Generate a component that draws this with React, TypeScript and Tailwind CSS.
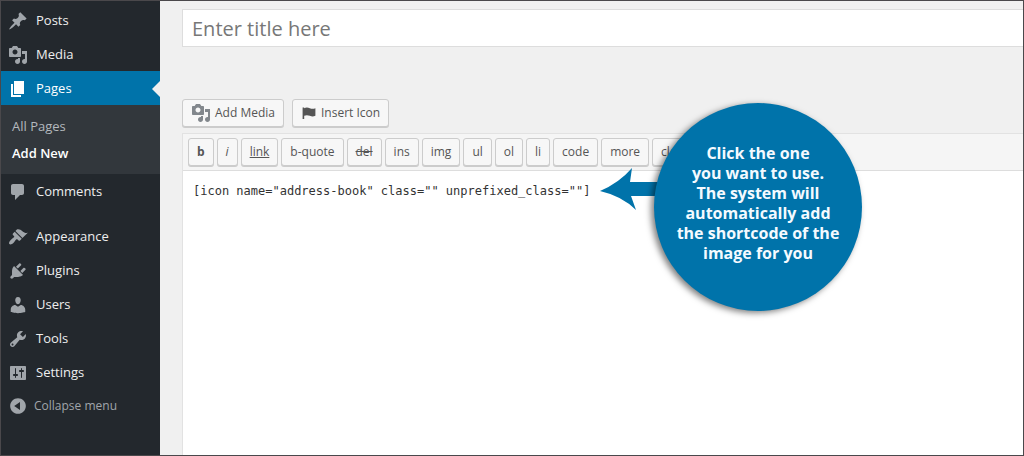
import clsx from "clsx";
import { useState } from "react";

const icons = {
  post: "M10.44 3.02l1.82-1.82 6.36 6.35-1.83 1.82c-1.05-.68-2.48-.57-3.41.36l-.75.75c-.92.93-1.04 2.35-.35 3.41l-1.83 1.82-2.41-2.41-2.8 2.79c-.42.42-3.38 2.71-3.8 2.29s1.86-3.39 2.28-3.81l2.79-2.79L4.1 9.36l1.83-1.82c1.05.69 2.48.57 3.4-.36l.75-.75c.93-.92 1.05-2.35.36-3.41z",
  media:
    "M13 11V4c0-.55-.45-1-1-1h-1.67L9 1H5L3.67 3H2c-.55 0-1 .45-1 1v7c0 .55.45 1 1 1h10c.55 0 1-.45 1-1zM7 4.5c1.38 0 2.5 1.12 2.5 2.5S8.38 9.5 7 9.5 4.5 8.38 4.5 7 5.62 4.5 7 4.5zM14 6h5v10.5c0 1.38-1.12 2.5-2.5 2.5S14 17.88 14 16.5s1.12-2.5 2.5-2.5c.17 0 .34.02.5.05V9h-3V6zm-4 8.05V13h2v3.5c0 1.38-1.12 2.5-2.5 2.5S7 17.88 7 16.5 8.12 14 9.5 14c.17 0 .34.02.5.05z",
  page: "M6 15V2h10v13H6zm-1 1h8v2H3V5h2v11z",
  comments: "M5 2h9c1.1 0 2 .9 2 2v7c0 1.1-.9 2-2 2h-2l-5 5v-5H5c-1.1 0-2-.9-2-2V4c0-1.1.9-2 2-2z",
  appearance:
    "M14.48 11.06L7.41 3.99l1.5-1.5c.5-.56 2.3-.47 3.51.32 1.21.8 1.43 1.28 2.91 2.1 1.18.64 2.45 1.26 4.45.85zm-.71.71L6.7 4.7 4.93 6.47c-.39.39-.39 1.02 0 1.41l1.06 1.06c.39.39.39 1.03 0 1.42-.6.6-1.43 1.11-2.21 1.69-.35.26-.7.53-1.01.84C1.43 14.23.4 16.08 1.4 17.07c.99 1 2.84-.03 4.18-1.36.31-.31.58-.66.85-1.02.57-.78 1.08-1.61 1.69-2.21.39-.39 1.02-.39 1.41 0l1.06 1.06c.39.39 1.02.39 1.41 0z",
  plugins:
    "M13.11 4.36L9.87 7.6 8 5.73l3.24-3.24c.35-.34 1.05-.2 1.56.32.52.51.66 1.21.31 1.55zm-8 1.77l.91-1.12 9.01 9.01-1.19.84c-.71.71-2.63 1.16-3.82 1.16H6.14L4.9 17.26c-.59.59-1.54.59-2.12 0-.59-.58-.59-1.53 0-2.12l1.24-1.24v-3.88c0-1.13.4-3.19 1.09-3.89zm7.26 3.97l3.24-3.24c.34-.35 1.04-.21 1.55.31.52.51.66 1.21.31 1.55l-3.24 3.25z",
  users:
    "M10 9.25c-2.27 0-2.73-3.44-2.73-3.44C7 4.02 7.82 2 9.97 2c2.16 0 2.98 2.02 2.71 3.81 0 0-.41 3.44-2.68 3.44zm0 2.57L12.72 10c2.39 0 4.52 2.33 4.52 4.53v2.49s-3.65 1.13-7.24 1.13c-3.65 0-7.24-1.13-7.24-1.13v-2.49c0-2.25 1.94-4.48 4.47-4.48z",
  tools:
    "M16.68 9.77c-1.34 1.34-3.3 1.67-4.95.99l-5.41 6.52c-.99.99-2.59.99-3.58 0s-.99-2.59 0-3.57l6.52-5.42c-.68-1.65-.35-3.61.99-4.95 1.28-1.28 3.12-1.62 4.72-1.06l-2.89 2.89 2.82 2.82 2.86-2.87c.53 1.58.18 3.39-1.08 4.65zM3.81 16.21c.4.39 1.04.39 1.43 0 .4-.4.4-1.04 0-1.43-.39-.4-1.03-.4-1.43 0-.39.39-.39 1.03 0 1.43z",
  settings:
    "M18 16V4c0-.55-.45-1-1-1H3c-.55 0-1 .45-1 1v12c0 .55.45 1 1 1h14c.55 0 1-.45 1-1zM8 11h1c.55 0 1 .45 1 1s-.45 1-1 1H8v1.5c0 .28-.22.5-.5.5s-.5-.22-.5-.5V13H6c-.55 0-1-.45-1-1s.45-1 1-1h1V5.5c0-.28.22-.5.5-.5s.5.22.5.5V11zm5-2h-1c-.55 0-1-.45-1-1s.45-1 1-1h1V5.5c0-.28.22-.5.5-.5s.5.22.5.5V7h1c.55 0 1 .45 1 1s-.45 1-1 1h-1v5.5c0 .28-.22.5-.5.5s-.5-.22-.5-.5V9z",
  collapse: "M10 2.16c4.33 0 7.84 3.51 7.84 7.84s-3.51 7.84-7.84 7.84S2.16 14.33 2.16 10 5.71 2.16 10 2.16zm2 11.72V6.12L6.18 9.97z",
  flag: "M2 3h2v1c2-1 4.500-1 7 0s4.500 1 7 0v9.500c-2.500 1-4.500 1-7 0s-5-1-7 0v4H2z",
};

type IconName = keyof typeof icons;

const contentMenu: { label: string; icon: IconName; children?: string[] }[] = [
  { label: "Posts", icon: "post" },
  { label: "Media", icon: "media" },
  { label: "Pages", icon: "page", children: ["All Pages", "Add New"] },
  { label: "Comments", icon: "comments" },
];

const adminMenu: { label: string; icon: IconName }[] = [
  { label: "Appearance", icon: "appearance" },
  { label: "Plugins", icon: "plugins" },
  { label: "Users", icon: "users" },
  { label: "Tools", icon: "tools" },
  { label: "Settings", icon: "settings" },
];

const quicktags = [
  { label: "b", className: "font-bold" },
  { label: "i", className: "italic" },
  { label: "link", className: "underline" },
  { label: "b-quote" },
  { label: "del", className: "line-through" },
  { label: "ins" },
  { label: "img" },
  { label: "ul" },
  { label: "ol" },
  { label: "li" },
  { label: "code" },
  { label: "more" },
  { label: "close" },
];

export default function App() {
  const [title, setTitle] = useState("");
  const [content, setContent] = useState('[icon name="address-book" class="" unprefixed_class=""]');

  return (
    <div className="relative flex min-h-screen overflow-hidden border border-[#4a484b] bg-[#f0f0f0] font-['Open_Sans','Noto_Sans',sans-serif]">
      <Sidebar />
      <main className="flex min-w-0 flex-1 flex-col pt-2 pl-[22px]">
        <input
          aria-label="Title"
          placeholder="Enter title here"
          value={title}
          onChange={(event) => setTitle(event.target.value)}
          className="h-[38px] w-full border border-r-0 border-[#ddd] bg-white px-[9px] text-xl text-[#444] outline-none placeholder:text-[#777]"
        />
        <div className="mt-[52px] flex gap-2">
          <MediaButton icon="media" label="Add Media" />
          <MediaButton icon="flag" label="Insert Icon" />
        </div>
        <section className="mt-[6px] flex flex-1 flex-col border-t border-l border-[#e2e2e2]">
          <div className="flex gap-[3px] overflow-hidden border-b border-[#ddd] bg-[#f5f5f5] px-[5px] py-1">
            {quicktags.map((tag) => (
              <button
                key={tag.label}
                type="button"
                className={clsx(
                  "h-7 shrink-0 rounded-[3px] border border-[#ccc] bg-[#f7f7f7] px-2 text-xs text-[#555] shadow-[0_1px_0_#ccc]",
                  tag.className,
                )}
              >
                {tag.label}
              </button>
            ))}
          </div>
          <textarea
            aria-label="Content"
            value={content}
            onChange={(event) => setContent(event.target.value)}
            spellCheck={false}
            className="w-full flex-1 resize-none bg-white px-[10px] py-[10px] font-['DejaVu_Sans_Mono','Liberation_Mono',monospace] text-xs leading-5 text-[#333] outline-none"
          />
        </section>
      </main>
      <Callout />
    </div>
  );
}

function Icon({ name, className }: { name: IconName; className?: string }) {
  return (
    <svg viewBox="0 0 20 20" fill="currentColor" fillRule="evenodd" aria-hidden="true" className={clsx("shrink-0", className)}>
      <path d={icons[name]} />
    </svg>
  );
}

function Sidebar() {
  return (
    <nav className="w-[159px] shrink-0 bg-[#23282d] pt-[2px] text-[13px] text-[#eee]">
      <ul>
        {contentMenu.map((item) => (
          <li key={item.label}>
            <MenuLink label={item.label} icon={item.icon} active={Boolean(item.children)} />
            {item.children && (
              <ul className="bg-[#32373c] pt-2 pb-[7px]">
                {item.children.map((child) => (
                  <li key={child}>
                    <a
                      href="#"
                      className={clsx(
                        "block px-[11px] leading-[27px]",
                        child === "Add New" ? "font-semibold text-white" : "text-[#b4b9be]",
                      )}
                    >
                      {child}
                    </a>
                  </li>
                ))}
              </ul>
            )}
          </li>
        ))}
      </ul>
      <ul className="mt-[11px]">
        {adminMenu.map((item) => (
          <li key={item.label}>
            <MenuLink label={item.label} icon={item.icon} />
          </li>
        ))}
      </ul>
      <button type="button" className="flex h-[34px] items-center gap-[6px] pl-[7px] text-xs text-[#a0a5aa]">
        <Icon name="collapse" className="h-5 w-5" />
        Collapse menu
      </button>
    </nav>
  );
}

function MenuLink({ label, icon, active = false }: { label: string; icon: IconName; active?: boolean }) {
  return (
    <a href="#" className={clsx("relative flex h-[34px] items-center gap-2 pt-px pl-[7px]", active && "bg-[#0073aa] text-white")}>
      <Icon name={icon} className={clsx("h-5 w-5", active ? "text-white" : "text-[#a0a5aa]")} />
      {label}
      {active && <span className="absolute right-0 border-y-8 border-r-8 border-y-transparent border-r-[#f0f0f0]" />}
    </a>
  );
}

function MediaButton({ icon, label }: { icon: IconName; label: string }) {
  return (
    <button
      type="button"
      className="flex h-7 items-center gap-1 rounded-[3px] border border-[#ccc] bg-[#f7f7f7] px-2 text-xs text-[#555] shadow-[0_1px_0_#ccc]"
    >
      <Icon name={icon} className={icon === "flag" ? "h-4 w-4" : "h-5 w-5 text-[#82878c]"} />
      {label}
    </button>
  );
}

function Callout() {
  return (
    <div className="absolute top-[102px] left-[599px] flex">
      <svg viewBox="0 0 60 42" fill="#0073aa" aria-hidden="true" className="mt-[65px] -mr-[6px] h-[42px] w-[60px]">
        <path d="M0 23Q19 15 32 0L30 14H60V28H31L36 42Q22 28 0 23z" />
      </svg>
      <div className="flex h-52 w-52 items-center justify-center rounded-full bg-[#0073aa] text-center shadow-[-3px_2px_6px_rgba(0,0,0,0.5)]">
        <p className="pb-2 text-base leading-5 font-bold text-[#f4faff]">
          Click the one
          <br />
          you want to use.
          <br />
          The system will
          <br />
          automatically add
          <br />
          the shortcode of the
          <br />
          image for you
        </p>
      </div>
    </div>
  );
}
